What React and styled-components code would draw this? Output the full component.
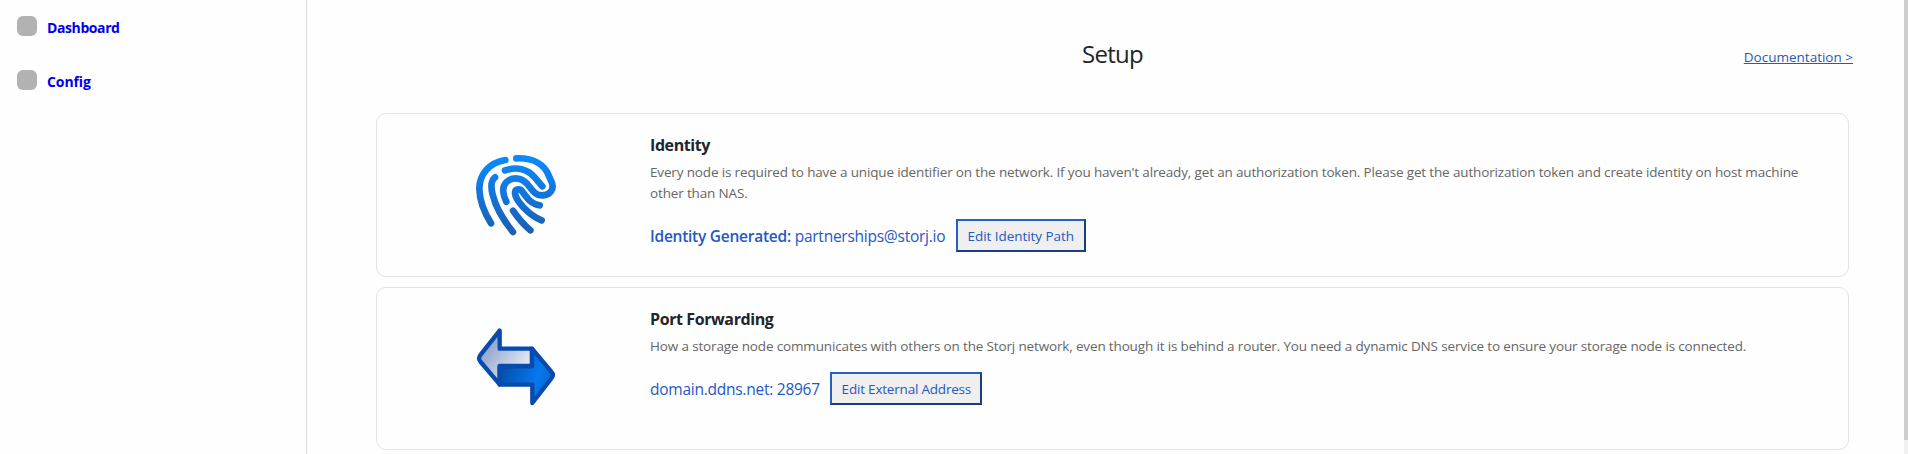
import React from "react";
import styled, { createGlobalStyle } from "styled-components";

const GlobalStyle = createGlobalStyle`
  * { box-sizing: border-box; }
  body {
    margin: 0;
    background: #fefefe;
    color: #212529;
    font-family: "Open Sans", "Noto Sans", sans-serif;
    overflow: hidden;
  }
`;

const Page = styled.div`
  display: flex;
  height: 454px;
  overflow: hidden;
`;

const Sidebar = styled.nav`
  flex: 0 0 307px;
  border-right: 1px solid #d9d9d9;
  padding: 16px 0 0 17px;
  display: flex;
  flex-direction: column;
  gap: 34px;
`;

const NavItem = styled.div`
  display: flex;
  align-items: flex-start;
  gap: 10px;
  height: 20px;
`;

const NavIcon = styled.span`
  width: 20px;
  height: 20px;
  border-radius: 6px;
  background: #b2b2b2;
`;

const NavLink = styled.a`
  color: #0000ee;
  font-size: 14px;
  font-weight: 700;
  line-height: 24px;
  letter-spacing: ${(p) => p.$tracking || "0"};
  text-decoration: none;
`;

const Main = styled.main`
  flex: 1;
  padding: 0 55px 0 69px;
`;

const Header = styled.header`
  display: grid;
  grid-template-columns: 1fr auto 1fr;
  align-items: start;
  height: 113px;
  margin-right: -4px;
  margin-left: -4px;
`;

const Title = styled.h1`
  grid-column: 2;
  margin: 36px 0 0;
  font-size: 24px;
  font-weight: 400;
  line-height: 36px;
  letter-spacing: -0.75px;
`;

const DocLink = styled.a`
  justify-self: end;
  margin-top: 46px;
  color: #2458c4;
  font-size: 13.5px;
  line-height: 22px;
  text-decoration: underline;
  text-decoration-thickness: 1px;
  text-underline-offset: 1px;
`;

const CardList = styled.div`
  display: flex;
  flex-direction: column;
  gap: 10px;
`;

const Card = styled.section`
  display: flex;
  height: ${(p) => p.$height};
  border: 1px solid #e3e3e3;
  border-radius: 10px;
`;

const IconCell = styled.div`
  flex: 0 0 273px;
  padding: ${(p) => p.$top} 0 0 99px;
  svg { display: block; overflow: visible; }
`;

const Body = styled.div`
  flex: 1;
  padding: 19px 40px 0 0;
`;

const Heading = styled.h2`
  margin: 0;
  font-size: 16px;
  font-weight: 700;
  line-height: 24px;
  letter-spacing: -0.4px;
`;

const Description = styled.p`
  margin: 5px 0 0;
  color: #666;
  font-size: 13.5px;
  line-height: 21px;
  letter-spacing: -0.151px;
`;

const StatusRow = styled.div`
  display: flex;
  align-items: center;
  margin-top: 15px;
  color: #2458c4;
  font-size: 15.5px;
  letter-spacing: -0.25px;
  white-space: pre;
`;

const Label = styled.span`
  font-weight: 600;
`;

const EditButton = styled.button`
  width: ${(p) => p.$width};
  height: 33px;
  margin-left: 10.5px;
  padding: 0;
  border: 2px solid;
  border-color: #2460c8 #183c85 #183c85 #2460c8;
  background: #efefef;
  color: #2458c4;
  font-family: inherit;
  font-size: 13.5px;
  letter-spacing: ${(p) => p.$tracking};
`;

const ScrollTrack = styled.div`
  flex: 0 0 4px;
  background: #f0f0f0;
`;

const ScrollThumb = styled.div`
  height: 440px;
  background: #cdcdcd;
`;

const FingerprintIcon = () => (
  <svg width="80" height="80" viewBox="47 44 240 240" fill="none">
    <defs>
      <linearGradient id="print" gradientUnits="userSpaceOnUse" x1="170" y1="44" x2="170" y2="284">
        <stop offset="0" stopColor="#0a8bff" />
        <stop offset="1" stopColor="#1d5db0" />
      </linearGradient>
    </defs>
    <g stroke="url(#print)" strokeWidth="20" strokeLinecap="round" strokeLinejoin="round">
      <path d="M135 59C88 67 57 100 57 146C58 185 74 220 92 249" />
      <path d="M104 111C91 121 92 143 97 163C107 205 133 244 158 275" />
      <path d="M168 54C222 52 253 75 265 105L275 128C282 148 268 164 248 165C222 166 213 145 200 130C189 119 179 114 166 114C142 114 126 133 129 155C130 167 134 176 138 184" />
      <path d="M134 90C173 77 204 89 223 111L246 138" />
      <path d="M238 195C213 191 203 177 187 155C180 143 164 145 164 158C165 178 201 222 244 240" />
      <path d="M158 211C173 233 190 253 210 270" />
    </g>
  </svg>
);

const ArrowsIcon = () => (
  <svg width="80" height="80" viewBox="50 50 240 240">
    <defs>
      <linearGradient id="arrowLeft" gradientUnits="userSpaceOnUse" x1="75" y1="100" x2="190" y2="190">
        <stop offset="0" stopColor="#8d9fc8" />
        <stop offset="1" stopColor="#e6ecf5" />
      </linearGradient>
      <linearGradient id="arrowRight" gradientUnits="userSpaceOnUse" x1="130" y1="170" x2="270" y2="215">
        <stop offset="0" stopColor="#0450ae" />
        <stop offset="0.75" stopColor="#0878ef" />
        <stop offset="1" stopColor="#0567d5" />
      </linearGradient>
    </defs>
    <g stroke="#064bad" strokeWidth="13" strokeLinejoin="round">
      <path d="M59 144Q60 138 64 133L121 61V115H218V167H121V222L64 155Q60 150 59 144Z" fill="url(#arrowLeft)" />
      <path d="M121 168H218V115L276 184Q281 189 281 194Q281 199 276 204L219 278V223H121Z" fill="url(#arrowRight)" />
    </g>
  </svg>
);

export default function App() {
  return (
    <>
      <GlobalStyle />
      <Page>
        <Sidebar>
          <NavItem>
            <NavIcon />
            <NavLink $tracking="-0.4px">Dashboard</NavLink>
          </NavItem>
          <NavItem>
            <NavIcon />
            <NavLink $tracking="-0.1px">Config</NavLink>
          </NavItem>
        </Sidebar>
        <Main>
          <Header>
            <Title>Setup</Title>
            <DocLink>Documentation &gt;</DocLink>
          </Header>
          <CardList>
            <Card $height="164px">
              <IconCell $top="41px"><FingerprintIcon /></IconCell>
              <Body>
                <Heading>Identity</Heading>
                <Description>
                  Every node is required to have a unique identifier on the network. If you haven't already, get an authorization token. Please get the authorization token and create identity on host machine other than NAS.
                </Description>
                <StatusRow>
                  <Label>Identity Generated:</Label>
                  <span> partnerships@storj.io</span>
                  <EditButton $width="130px" $tracking="-0.05px">Edit Identity Path</EditButton>
                </StatusRow>
              </Body>
            </Card>
            <Card $height="163px">
              <IconCell $top="39px"><ArrowsIcon /></IconCell>
              <Body>
                <Heading>Port Forwarding</Heading>
                <Description>
                  How a storage node communicates with others on the Storj network, even though it is behind a router. You need a dynamic DNS service to ensure your storage node is connected.
                </Description>
                <StatusRow>
                  <span>domain.ddns.net: 28967</span>
                  <EditButton $width="152px" $tracking="-0.2px">Edit External Address</EditButton>
                </StatusRow>
              </Body>
            </Card>
          </CardList>
        </Main>
        <ScrollTrack>
          <ScrollThumb />
        </ScrollTrack>
      </Page>
    </>
  );
}
